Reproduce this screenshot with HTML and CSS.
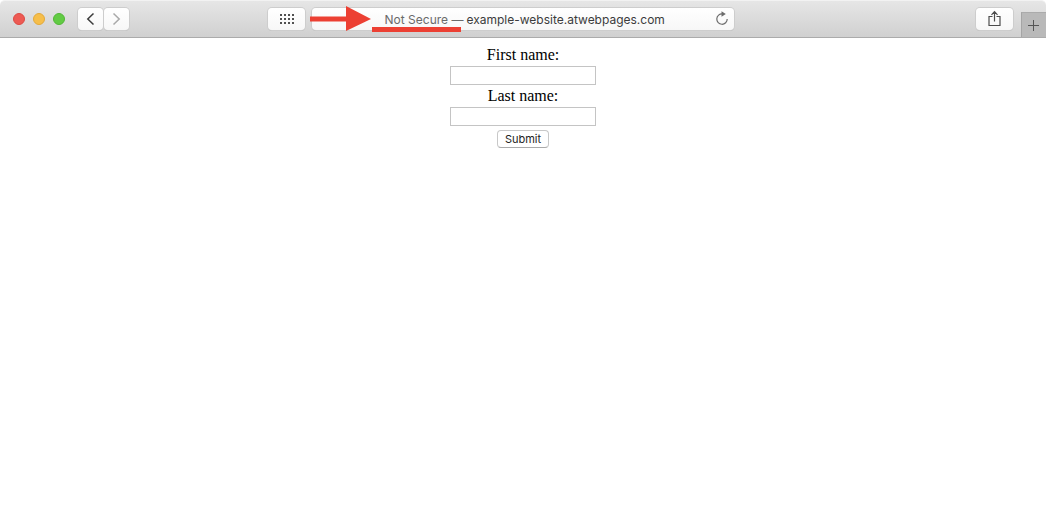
FILE: index.html
```html
<!DOCTYPE html>
<html lang="en">
<head>
<meta charset="utf-8">
<title>example-website.atwebpages.com</title>
<link rel="stylesheet" href="styles.css">
</head>
<body>
<header class="toolbar">
  <div class="side side-left">
    <div class="lights">
      <button class="light close" aria-label="Close"></button>
      <button class="light minimize" aria-label="Minimize"></button>
      <button class="light expand" aria-label="Full screen"></button>
    </div>
    <nav class="history">
      <button class="tool small" aria-label="Back"><svg width="25" height="22" viewBox="0 0 25 22" fill="none" stroke="#3c3c3c" stroke-width="1.5"><path d="M15.5 5.5 9.8 11l5.7 5.5"/></svg></button>
      <button class="tool small" aria-label="Forward" disabled><svg width="25" height="22" viewBox="0 0 25 22" fill="none" stroke="#a8a8a8" stroke-width="1.5"><path d="M9.5 5.5l5.7 5.5-5.7 5.5"/></svg></button>
    </nav>
    <button class="tool wide grid-button" aria-label="Top sites"><svg width="37" height="22" viewBox="0 0 37 22" fill="none" stroke="#505050" stroke-width="2" stroke-dasharray="2 2"><path d="M12 7h14M12 11h14M12 15h14"/></svg></button>
  </div>
  <div class="address">
    <label class="security" for="url">Not Secure —</label>
    <input class="url" id="url" type="text" value="example-website.atwebpages.com" spellcheck="false">
    <button class="reload" aria-label="Reload"><svg width="14" height="16" viewBox="0 0 14 16"><path d="M7.500 3.900A5.200 5.200 0 1 0 12.200 9" fill="none" stroke="#6c6c6c" stroke-width="1.2"/><path d="M6.500 1.200 10.800 3.900 6.500 6.700z" fill="#6c6c6c"/></svg></button>
    <svg class="arrow" width="62" height="26" viewBox="0 0 62 26" fill="#ec4033"><path d="M0 10.500h36V0l25 13-25 12V15.500H0z"/></svg>
    <span class="underline"></span>
  </div>
  <div class="side side-right">
    <button class="tool wide" aria-label="Share"><svg width="37" height="22" viewBox="0 0 37 22" fill="none" stroke="#4c4c4c" stroke-width="1.2"><path d="M16.500 8.500h-3.500v9h11v-9h-3.500M18.500 13.500V4M15.500 6.800 18.500 3.700l3 3.100"/></svg></button>
    <button class="new-tab" aria-label="New tab"><svg width="24" height="24" viewBox="0 0 24 24" stroke="#555" stroke-width="1"><path d="M6 12.500h11M11.500 7v11"/></svg></button>
  </div>
</header>
<main class="page">
  <form class="form">
    <label for="first">First name:</label>
    <input class="field" id="first" type="text">
    <label for="last">Last name:</label>
    <input class="field" id="last" type="text">
    <button class="submit" type="button">Submit</button>
  </form>
</main>
</body>
</html>
```
FILE: styles.css
```css
* { box-sizing: border-box; }
body {
  margin: 0;
  background: #fff;
  font-family: "Liberation Serif", "Times New Roman", serif;
  font-size: 16px;
  color: #000;
}
button { padding: 0; border: 0; }
svg { display: block; }

.toolbar {
  display: grid;
  grid-template-columns: 1fr minmax(0, 422px) 1fr;
  align-items: center;
  height: 38px;
  border-top: 1px solid #f2f2f2;
  border-bottom: 1px solid #ababab;
  border-radius: 5px 5px 0 0;
  background: linear-gradient(#e6e6e6, #d0d0d0);
}
.side { display: flex; align-items: center; }
.side-left { padding: 0 7px 0 13px; }
.side-right { align-self: stretch; justify-content: flex-end; gap: 8px; }
.lights { display: flex; gap: 8px; margin-right: 13px; }
.light { width: 12px; height: 12px; border-radius: 50%; }
.close { background: #ed5a53; border: 1px solid #dc4a43; }
.minimize { background: #f6be4a; border: 1px solid #e2a93a; }
.expand { background: #62cb44; border: 1px solid #51b736; }
.history { display: flex; gap: 1px; }
.tool, .address {
  border-radius: 4px;
  background: linear-gradient(#fff, #f7f7f7);
  box-shadow: 0 0 0 1px #cdcdcd, 0 1px 0 0 #b9b9b9;
}
.tool { height: 22px; }
.small { width: 25px; }
.wide { width: 37px; }
.grid-button { margin-left: auto; }

.address {
  position: relative;
  display: flex;
  align-items: center;
  justify-content: center;
  gap: 3px;
  height: 22px;
  padding-left: 4px;
  font-family: Inter, Roboto, sans-serif;
  font-size: 12px;
  color: #3c3c3c;
}
.security { color: #6a6a6a; }
.url {
  width: 199px;
  padding: 0;
  border: 0;
  background: none;
  font: inherit;
  color: inherit;
}
.reload {
  position: absolute;
  right: 5px;
  top: 2px;
  background: none;
}
.arrow { position: absolute; left: -2px; top: -2px; }
.underline {
  position: absolute;
  left: 60px;
  top: 19px;
  width: 89px;
  height: 5px;
  background: #ec4033;
}
.new-tab {
  align-self: flex-end;
  width: 25px;
  height: 25px;
  border-left: 1px solid #a5a5a5;
  border-top: 1px solid #ababab;
  background: #b9b9b9;
}

.page { padding: 8px; }
.form {
  display: flex;
  flex-direction: column;
  align-items: center;
  line-height: 18px;
}
.field {
  width: 146px;
  height: 19px;
  margin: 2px 0;
  padding: 1px 3px;
  border: 1px solid #c4c4c4;
}
.submit {
  height: 18px;
  margin-top: 2px;
  padding: 0 7px;
  border: 1px solid #c8c8c8;
  border-bottom-color: #aaa;
  border-radius: 4px;
  background: #fff;
  font-family: Inter, Roboto, sans-serif;
  font-size: 11px;
  line-height: 16px;
  color: #222;
}
```
